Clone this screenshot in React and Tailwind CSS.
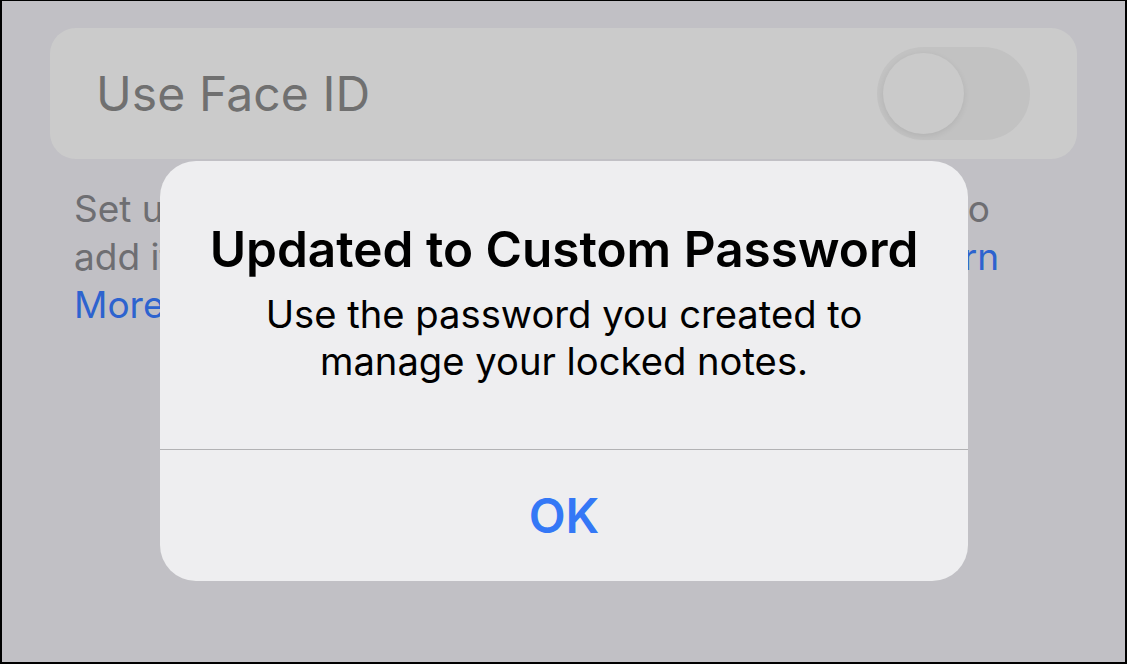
const App = () => {
  return (
    <div className="relative w-[1127px] h-[664px] overflow-hidden bg-[#c1c0c5] border-t border-r-2 border-l-2 border-b-2 border-black font-['Inter','Liberation_Sans',sans-serif]">
      {/* Settings row behind the alert */}
      <div className="mt-[27px] ml-[48px] mr-[48px] h-[131px] rounded-[26px] bg-[#cbcbcb] flex items-center justify-between pl-[46px] pr-[47px]">
        <span className="text-[48px] leading-[58px] text-[#707070] tracking-[0.1px]">Use Face ID</span>
        <div className="w-[153px] h-[93px] rounded-full bg-[#c2c2c2] p-[6px] flex items-center">
          <div className="w-[81px] h-[81px] rounded-full bg-[#cacaca] shadow-[0_2px_6px_rgba(0,0,0,0.08)]" />
        </div>
      </div>

      {/* Footer text */}
      <div className="mt-[26px] ml-[72px] mr-[126px] text-[37px] leading-[48px] text-[#6e6e72]">
        <div className="flex justify-between pr-[9px]">
          <span>Set up Face ID</span>
          <span>to</span>
        </div>
        <div className="flex justify-between">
          <span>add it</span>
          <span className="text-[#2d63cf]">Learn</span>
        </div>
        <div className="text-[#2d63cf]">More</div>
      </div>

      {/* Alert */}
      <div className="absolute top-[160px] left-[158px] w-[808px] h-[420px] rounded-[36px] bg-[#eeeef0] flex flex-col">
        <div className="h-[288px] pt-[59px] flex flex-col items-center text-center">
          <h2 className="text-[49.5px] leading-[58px] font-semibold text-black">
            Updated to Custom Password
          </h2>
          <p className="mt-[13px] text-[38.2px] leading-[47px] text-black">
            Use the password you created to
            <br />
            manage your locked notes.
          </p>
        </div>
        <div className="h-px bg-[#b2b2b4]" />
        <button className="flex-1 flex items-center justify-center text-[48px] leading-[58px] font-semibold text-[#3478f6]">
          OK
        </button>
      </div>
    </div>
  );
};

export default App;
